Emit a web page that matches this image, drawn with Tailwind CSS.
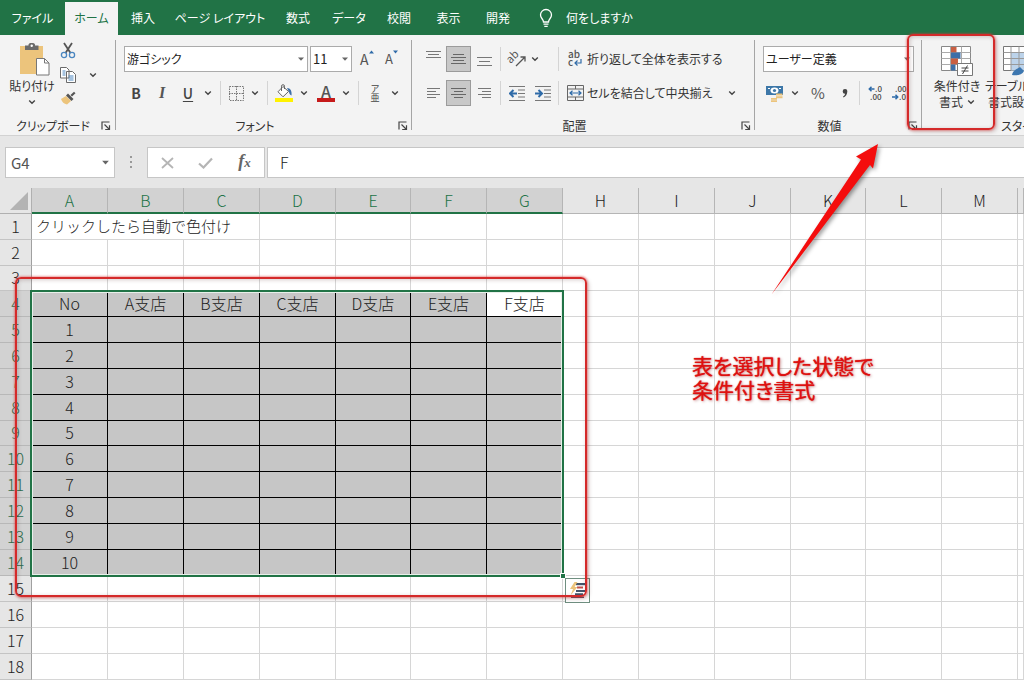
<!DOCTYPE html>
<html lang="ja">
<head>
<meta charset="utf-8">
<title>Excel</title>
<script src="https://cdn.jsdelivr.net/npm/@tailwindcss/browser@4"></script>
</head>
<body class="relative flex h-screen flex-col overflow-hidden bg-[#e6e6e6] font-['Noto_Sans_CJK_JP',sans-serif] text-[12px] leading-4 text-[#333]">

<svg class="hidden">
  <symbol id="chev" viewBox="0 0 8 8"><path d="M1.2 2.4 4 5.2 6.8 2.4" fill="none" stroke="#444" stroke-width="1.4"/></symbol>
  <symbol id="tri" viewBox="0 0 8 8"><path d="M1 2.5h6L4 5.8z" fill="#666"/></symbol>
  <symbol id="launch" viewBox="0 0 10 10"><path d="M1 8.5V1h7.5M3.5 3.5 8 8M8.5 4.2v4.3H4.2" fill="none" stroke="#444" stroke-width="1.2"/></symbol>
</svg>

<nav class="flex h-[35px] shrink-0 items-stretch bg-[#217346] text-white [font-feature-settings:'palt']">
  <button class="w-[65px]">ファイル</button>
  <button class="mt-[2px] w-[53px] bg-[#f3f3f3] pb-[2px] text-[#217346]">ホーム</button>
  <button class="w-[50px]">挿入</button>
  <button class="w-[104px] whitespace-nowrap">ページ レイアウト</button>
  <button class="w-[52px]">数式</button>
  <button class="w-[50px]">データ</button>
  <button class="w-[50px]">校閲</button>
  <button class="w-[49px]">表示</button>
  <button class="w-[50px]">開発</button>
  <button class="ml-[15px] flex items-center gap-3 whitespace-nowrap">
    <svg class="h-[20px] w-[16px]" viewBox="0 0 16 20" fill="none" stroke="#fff" stroke-width="1.3"><path d="M5.500 14c0-3-3-3.600-3-7a5.500 5.500 0 0 1 11 0c0 3.400-3 4-3 7zM5.500 16.200h5M6.300 18.300h3.400"/></svg>
    何をしますか
  </button>
</nav>

<div class="flex h-[101px] shrink-0 overflow-hidden border-b border-[#d2d2d2] bg-[#f3f3f3] [font-feature-settings:'palt']">

  <section class="flex w-[115px] shrink-0 flex-col">
    <div class="flex h-[80px] pt-[7px] pl-[6px]">
      <button class="flex w-[52px] flex-col items-center whitespace-nowrap">
        <svg class="ml-[4px] h-[34px] w-[32px]" viewBox="0 0 32 34"><path d="M2 4h23v28H2z" fill="#ecc47c"/><path d="M7 3.500h3.500V2.500a2 2 0 0 1 2-1.500h2.500a2 2 0 0 1 2 1.500v1h3.500V8H7z" fill="#6a6a6a"/><circle cx="13.700" cy="3.700" r="1.200" fill="#fff"/><path d="M18.500 16.500h8l4.500 4.500v12H18.500z" fill="#fff" stroke="#777"/><path d="M26.500 16.500V21H31" fill="none" stroke="#777"/></svg>
        <span class="mt-[2px]">貼り付け</span>
        <svg class="mt-1 h-2 w-2"><use href="#chev"/></svg>
      </button>
      <div class="flex w-5 flex-col items-center gap-[8px]">
        <button aria-label="切り取り"><svg class="block h-[17px] w-4" viewBox="0 0 16 17" fill="none"><path d="M4 1l6.500 10M12 1 5.500 11" stroke="#555" stroke-width="1.800"/><circle cx="4" cy="13" r="2.600" stroke="#4a86c0" stroke-width="1.300"/><circle cx="12" cy="13" r="2.600" stroke="#4a86c0" stroke-width="1.300"/></svg></button>
        <button aria-label="コピー"><svg class="block h-4 w-4" viewBox="0 0 16 16" fill="#fff" stroke="#6a6a6a"><path d="M.5.500h6L9 3v8H.500zM6.500 4.500h6L15.500 7.500v8h-9z"/><path d="M2.500 4h3M2.500 6h3M2.500 8h3M8.500 9h5M8.500 11h5M8.500 13h5" stroke="#4a86c0"/></svg></button>
        <button aria-label="書式のコピー"><svg class="block h-[14px] w-4" viewBox="0 0 16 14"><path d="M1 8l5-3 5 5-4 3.500C4 13 2 11 1 8z" fill="#ecc47c"/><path d="M6 4.500 8 2.500l5.500 5.500-2 2z" fill="#555"/><path d="M10.500 4 14 .800l1.500 1.500L12 5.500z" fill="#555"/></svg></button>
      </div>
      <button class="ml-[7px] flex w-4 items-start justify-center pt-[29px]" aria-label="コピーのオプション"><svg class="h-2 w-2"><use href="#chev"/></svg></button>
    </div>
    <div class="flex items-center pt-[3px] pr-1 pl-[16px]"><span class="flex-1 whitespace-nowrap">クリップボード</span><button aria-label="クリップボードの設定"><svg class="block h-[10px] w-[10px]"><use href="#launch"/></svg></button></div>
  </section>
  <div class="my-[5px] w-px shrink-0 bg-[#a5a5a5]"></div>

  <section class="flex w-[295px] shrink-0 flex-col">
    <div class="flex h-[80px] flex-col gap-[8px] pt-[11px] pl-2">
      <div class="flex h-[26px] items-center">
        <div class="grid w-[184px] items-center">
          <select aria-label="フォント名" class="col-start-1 row-start-1 h-[26px] appearance-none border border-[#ababab] bg-white pl-[2px] text-[#222]"><option>游ゴシック</option></select>
          <svg class="pointer-events-none col-start-1 row-start-1 mr-[3px] h-2 w-2 justify-self-end"><use href="#tri"/></svg>
        </div>
        <div class="ml-[2px] grid w-[42px] items-center">
          <select aria-label="フォントサイズ" class="col-start-1 row-start-1 h-[26px] appearance-none border border-[#ababab] bg-white pl-[2px] text-[13px] text-[#222]"><option>11</option></select>
          <svg class="pointer-events-none col-start-1 row-start-1 mr-[3px] h-2 w-2 justify-self-end"><use href="#tri"/></svg>
        </div>
        <button class="ml-2 flex h-5 w-[18px] items-start" aria-label="拡大"><span class="text-[14px] leading-5 text-[#555]">A</span><svg class="mt-px h-1 w-[5px]" viewBox="0 0 5 4"><path d="M0 3.500 2.500.500 5 3.500z" fill="#2f6ba8"/></svg></button>
        <button class="ml-[7px] flex h-5 w-[18px] items-start" aria-label="縮小"><span class="text-[13px] leading-5 text-[#555]">A</span><svg class="mt-px h-1 w-[5px]" viewBox="0 0 5 4"><path d="M0 .500 2.500 3.500 5 .500z" fill="#2f6ba8"/></svg></button>
      </div>
      <div class="flex h-[26px] items-center">
        <button class="w-6 text-[14px] font-bold text-[#444]">B</button>
        <button class="w-7 font-['Liberation_Serif',serif] text-[16px] font-bold text-[#555] italic">I</button>
        <button class="w-6 text-[14px] font-medium text-[#444] underline underline-offset-2">U</button>
        <button class="flex w-4 justify-center" aria-label="下線のオプション"><svg class="h-2 w-2"><use href="#chev"/></svg></button>
        <div class="mx-1 h-6 w-px bg-[#d4d4d4]"></div>
        <button class="flex w-[22px] justify-center" aria-label="罫線"><svg class="h-[15px] w-[15px]" viewBox="0 0 15 15"><path d="M.5.500h14v14H.500zM7.500 0v15M0 7.500h15" fill="none" stroke="#777" stroke-dasharray="1.500 1"/></svg></button>
        <button class="flex w-4 justify-center" aria-label="罫線のオプション"><svg class="h-2 w-2"><use href="#chev"/></svg></button>
        <div class="mx-1 h-6 w-px bg-[#d4d4d4]"></div>
        <button class="flex w-6 justify-center" aria-label="塗りつぶしの色"><svg class="h-[18px] w-[18px]" viewBox="0 0 18 18"><path d="M0 14h18v4H0z" fill="#fff200"/><path d="M8 2.500 13.500 7.500 8 12.800 3 7.800z" fill="#fff" stroke="#666"/><path d="M6.500 7V2.200a1.500 1.500 0 0 1 3 0V5" fill="none" stroke="#666"/><path d="M12 4c3.500 0 5 3 4.500 7.500-2-.5-2.200-3-3-4.500z" fill="#3d6fa8"/></svg></button>
        <button class="flex w-4 justify-center" aria-label="塗りつぶしのオプション"><svg class="h-2 w-2"><use href="#chev"/></svg></button>
        <button class="ml-[2px] flex w-6 flex-col items-center" aria-label="フォントの色"><span class="h-[14px] text-[16px] leading-[14px] font-medium text-[#555]">A</span><span class="h-1 w-[18px] bg-[#c61a1a]"></span></button>
        <button class="flex w-4 justify-center" aria-label="フォントの色のオプション"><svg class="h-2 w-2"><use href="#chev"/></svg></button>
        <div class="mx-1 h-6 w-px bg-[#d4d4d4]"></div>
        <button class="flex w-6 flex-col items-center text-[9px] leading-[9px] text-[#444] antialiased" aria-label="ふりがな"><span>ア</span><span>亜</span></button>
        <button class="flex w-4 justify-center" aria-label="ふりがなのオプション"><svg class="h-2 w-2"><use href="#chev"/></svg></button>
      </div>
    </div>
    <div class="flex items-center pt-[3px] pr-[3px]"><span class="flex-1 pr-1 text-center">フォント</span><button aria-label="フォントの設定"><svg class="block h-[10px] w-[10px]"><use href="#launch"/></svg></button></div>
  </section>
  <div class="my-[5px] w-px shrink-0 bg-[#a5a5a5]"></div>

  <section class="flex w-[342px] shrink-0 flex-col">
    <div class="flex h-[80px] flex-col gap-[8px] pt-[11px] pl-2">
      <div class="flex h-[26px] items-center">
        <button class="flex w-[26px] justify-center pb-[8px]" aria-label="上揃え"><svg class="h-2 w-[15px]" viewBox="0 0 15 8"><path d="M0 .500h15M2 3.500h11M0 6.500h15" stroke="#777"/></svg></button>
        <button class="flex h-[26px] w-[25px] items-center justify-center border border-[#9b9b9b] bg-[#c8c8c8]" aria-label="上下中央揃え"><svg class="h-[11px] w-[15px]" viewBox="0 0 15 11"><path d="M2 .500h11M0 3.500h15M2 6.500h11M0 9.500h15" stroke="#666"/></svg></button>
        <button class="flex w-[26px] justify-center pt-[6px]" aria-label="下揃え"><svg class="h-[10px] w-[15px]" viewBox="0 0 15 10"><path d="M0 .500h15M2 4.500h11M0 8.500h15" stroke="#777"/></svg></button>
        <div class="mr-1 ml-[3px] h-6 w-px bg-[#d4d4d4]"></div>
        <button class="flex w-6 justify-center" aria-label="方向"><svg class="h-[18px] w-[18px] overflow-visible" viewBox="0 0 18 18"><text x="0" y="10" transform="rotate(-45 6 9)" font-size="11" fill="#555" font-family="Noto Sans CJK JP, sans-serif">ab</text><path d="M8 16 16.500 7.500M12.500 7h4.500v4.500" fill="none" stroke="#555" stroke-width="1.300"/></svg></button>
        <button class="flex w-3 justify-center" aria-label="方向のオプション"><svg class="h-2 w-2"><use href="#chev"/></svg></button>
        <div class="mr-2 ml-[17px] h-6 w-px bg-[#d4d4d4]"></div>
        <button class="flex items-center gap-1 whitespace-nowrap"><svg class="h-[18px] w-4 overflow-visible" viewBox="0 0 16 18"><g font-size="10" font-weight="500" fill="#555" font-family="Noto Sans CJK JP, sans-serif"><text x="1" y="8">ab</text><text x="1" y="16">c</text></g><path d="M14 9v4H8.500M10.500 10.500 8 13l2.500 2.500" fill="none" stroke="#2f6ba8" stroke-width="1.200"/></svg>折り返して全体を表示する</button>
      </div>
      <div class="flex h-[26px] items-center">
        <button class="flex w-[26px] justify-center" aria-label="左揃え"><svg class="h-[10px] w-[13px]" viewBox="0 0 13 10"><path d="M0 .500h13M0 3.500h9M0 6.500h13M0 9.500h9" stroke="#777"/></svg></button>
        <button class="flex h-[26px] w-[25px] items-center justify-center border border-[#9b9b9b] bg-[#c8c8c8]" aria-label="中央揃え"><svg class="h-[10px] w-[15px]" viewBox="0 0 15 10"><path d="M0 .500h15M3 3.500h9M0 6.500h15M3 9.500h9" stroke="#666"/></svg></button>
        <button class="flex w-[26px] justify-center" aria-label="右揃え"><svg class="h-[10px] w-[13px]" viewBox="0 0 13 10"><path d="M0 .500h13M4 3.500h9M0 6.500h13M4 9.500h9" stroke="#777"/></svg></button>
        <div class="mr-1 ml-[3px] h-6 w-px bg-[#d4d4d4]"></div>
        <button class="flex w-6 justify-center" aria-label="インデントを減らす"><svg class="h-[15px] w-4" viewBox="0 0 16 15" fill="none"><path d="M0 .500h16M9 4h7M9 7.500h7M9 11h7M0 14.500h16" stroke="#777"/><path d="M8 7.500H1.500M4.500 4 1 7.500 4.500 11" stroke="#2f6ba8" stroke-width="2"/></svg></button>
        <button class="ml-[2px] flex w-6 justify-center" aria-label="インデントを増やす"><svg class="h-[15px] w-4" viewBox="0 0 16 15" fill="none"><path d="M0 .500h16M9 4h7M9 7.500h7M9 11h7M0 14.500h16" stroke="#777"/><path d="M0 7.500h6.500M3.500 4 7 7.500 3.500 11" stroke="#2f6ba8" stroke-width="2"/></svg></button>
        <div class="mr-2 ml-[3px] h-6 w-px bg-[#d4d4d4]"></div>
        <button class="flex items-center gap-[3px] whitespace-nowrap"><svg class="h-4 w-[17px]" viewBox="0 0 17 16" fill="none"><path d="M.5.500h16v15H.500zM.5 4h16M.5 12h16M8.500.500V4M8.500 12v3.500" stroke="#666"/><path d="M3 8h11M5.500 5.800 3 8l2.500 2.200M11.500 5.800 14 8l-2.500 2.200" stroke="#2f6ba8" stroke-width="1.200"/></svg>セルを結合して中央揃え</button>
        <button class="mr-[14px] ml-auto flex w-4 justify-center" aria-label="結合のオプション"><svg class="h-2 w-2"><use href="#chev"/></svg></button>
      </div>
    </div>
    <div class="flex items-center pt-[3px] pr-[3px]"><span class="flex-1 pr-[4px] text-center">配置</span><button aria-label="配置の設定"><svg class="block h-[10px] w-[10px]"><use href="#launch"/></svg></button></div>
  </section>
  <div class="my-[5px] w-px shrink-0 bg-[#a5a5a5]"></div>

  <section class="flex w-[166px] shrink-0 flex-col">
    <div class="flex h-[80px] flex-col gap-[8px] pt-[11px] pl-2">
      <div class="grid h-[26px] w-[151px] items-center">
        <select aria-label="表示形式" class="col-start-1 row-start-1 h-[26px] appearance-none border border-[#ababab] bg-white pl-[2px] text-[#222]"><option>ユーザー定義</option></select>
        <svg class="pointer-events-none col-start-1 row-start-1 mr-[3px] h-2 w-2 justify-self-end"><use href="#tri"/></svg>
      </div>
      <div class="flex h-[26px] items-center">
        <button class="flex w-6 justify-center" aria-label="通貨"><svg class="h-[17px] w-[18px]" viewBox="0 0 18 17"><path d="M0 1h17v9H0z" fill="#3d77a8"/><ellipse cx="8.500" cy="5.500" rx="4" ry="3" fill="#fff"/><circle cx="8.500" cy="5.500" r="1.600" fill="#3d77a8"/><path d="M2 3h2v1H2zM13 3h2v1h-2z" fill="#fff"/><path d="M10 8.500h6.500v2H10zM10 11.200h6.500v2H10zM5 13h6v1.700H5zM5 15.300h6V17H5z" fill="#ecc47c"/></svg></button>
        <button class="flex w-4 justify-center" aria-label="通貨のオプション"><svg class="h-2 w-2"><use href="#chev"/></svg></button>
        <button class="w-[30px] text-[15px] text-[#555]">%</button>
        <button class="flex w-6 justify-center" aria-label="桁区切り"><svg class="h-[9px] w-[6px]" viewBox="0 0 6 9"><path d="M3 0a2.300 2.300 0 0 1 2.300 2.600C5.200 5.500 3.800 7.500 1.500 8.500L1 7.500C2.300 6.800 3 5.800 3.100 4.700A2.300 2.300 0 1 1 3 0z" fill="#444"/></svg></button>
        <div class="mr-1 ml-[2px] h-6 w-px bg-[#d4d4d4]"></div>
        <button class="flex w-6 justify-center" aria-label="小数点以下の表示桁数を増やす"><svg class="h-4 w-4 overflow-visible" viewBox="0 0 16 16"><g font-size="8" font-weight="500" fill="#444" font-family="Noto Sans CJK JP, sans-serif"><text x="7" y="7">.0</text><text x="2" y="15">.00</text></g><path d="M6.500 4H1.500M3.500 1.800 1.300 4l2.200 2.200" stroke="#2f6ba8" stroke-width="1.500" fill="none"/></svg></button>
        <button class="flex w-6 justify-center" aria-label="小数点以下の表示桁数を減らす"><svg class="h-4 w-4 overflow-visible" viewBox="0 0 16 16"><g font-size="8" font-weight="500" fill="#444" font-family="Noto Sans CJK JP, sans-serif"><text x="3" y="7">.00</text><text x="7" y="15">.0</text></g><path d="M0 12h5.500M3.500 9.800 5.700 12l-2.200 2.200" stroke="#2f6ba8" stroke-width="1.500" fill="none"/></svg></button>
      </div>
    </div>
    <div class="flex items-center pt-[3px] pr-[3px]"><span class="flex-1 pr-[4px] text-center">数値</span><button aria-label="数値の設定"><svg class="block h-[10px] w-[10px]"><use href="#launch"/></svg></button></div>
  </section>
  <div class="my-[5px] w-px shrink-0 bg-[#a5a5a5]"></div>

  <section class="flex min-w-[200px] flex-1 flex-col">
    <div class="flex h-[80px] pt-[10px] pl-2">
      <button class="flex w-[54px] flex-col items-center whitespace-nowrap">
        <svg class="h-[32px] w-[32px]" viewBox="0 0 32 32"><path d="M.5 1.500h29v24H.500z" fill="#fff" stroke="#888"/><path d="M.5 7.500h29M.5 13.500h29M.5 19.500h29M9.500 1.500v24M20.500 1.500v24" stroke="#aaa"/><path d="M10 2h5.500v5.500H10z" fill="#c95f42"/><path d="M10 7.500h9.500v6H10z" fill="#3d6fa8"/><path d="M10 13.500h7v6h-7z" fill="#c95f42"/><path d="M10 19.500h4.500v6H10z" fill="#3d6fa8"/><path d="M16.500 18.500h15v12h-15z" fill="#fff" stroke="#777"/><path d="M20.500 23h7M20.500 26h7M26.500 20.500l-5 8.500" stroke="#444"/></svg>
        <span class="mt-px">条件付き</span>
        <span class="flex items-center gap-1">書式<svg class="h-2 w-2"><use href="#chev"/></svg></span>
      </button>
      <button class="ml-px flex w-[76px] flex-col items-start whitespace-nowrap">
        <svg class="ml-[18px] h-[32px] w-[34px]" viewBox="0 0 34 32"><path d="M.5 1.500h31v24H.500z" fill="#fff" stroke="#777"/><path d="M8 7.500h24v18H8z" fill="#bcd3ea"/><path d="M.5 7.500h31M.5 13.500h31M.5 19.500h31M8 1.500v24M16 1.500v24M24 1.500v24" stroke="#999"/><path d="M9 30c1-5 5-6 8-8l4 4c-2 4-7 5-12 4z" fill="#3d77b0"/></svg>
        <span class="mt-px">テーブルとして</span>
        <span class="ml-[3px] flex items-center gap-1">書式設定<svg class="h-2 w-2"><use href="#chev"/></svg></span>
      </button>
    </div>
    <div class="pt-[3px] pl-[79px] whitespace-nowrap">スタイル</div>
  </section>
</div>

<div class="flex h-[52px] shrink-0 items-start pt-[11px] pl-[5px] text-[15px]">
  <div class="grid w-[110px] items-center">
    <input aria-label="名前ボックス" value="G4" class="col-start-1 row-start-1 h-[31px] w-full border border-[#c6c6c6] bg-white pl-[5px] text-[#555]">
    <svg class="pointer-events-none col-start-1 row-start-1 mr-[5px] h-[9px] w-[9px] justify-self-end"><use href="#tri"/></svg>
  </div>
  <svg class="mx-[14px] mt-2 h-[14px] w-1" viewBox="0 0 4 14" fill="#999"><path d="M1 1h2v2H1zM1 6h2v2H1zM1 11h2v2H1z"/></svg>
  <div class="flex h-[31px] w-[118px] items-center border border-[#c6c6c6] bg-white">
    <button class="flex w-[38px] justify-center" aria-label="キャンセル"><svg class="h-[12px] w-[13px]" viewBox="0 0 13 12"><path d="M1 1l11 10M12 1 1 11" stroke="#b5b5b5" stroke-width="1.800"/></svg></button>
    <button class="flex w-[39px] justify-center" aria-label="入力"><svg class="h-[12px] w-[15px]" viewBox="0 0 15 12"><path d="M1 6.500 5.500 10.500 14 1.500" fill="none" stroke="#b5b5b5" stroke-width="2.200"/></svg></button>
    <button class="w-[39px] pb-[2px] font-['Liberation_Serif',serif] text-[18px] font-bold text-[#666] italic" aria-label="関数の挿入">f<span class="text-[13px]">x</span></button>
  </div>
  <input aria-label="数式バー" value="F" class="ml-[2px] h-[31px] min-w-0 flex-1 border border-r-0 border-[#c6c6c6] bg-white pb-[2px] pl-[12px] text-[16px] font-light text-[#222]">
</div>

<main class="relative flex-1 bg-white">
  <table class="w-full table-fixed border-separate border-spacing-0 text-[16px] leading-5 font-light text-[#222]">
    <colgroup>
      <col class="w-[32px]"><col class="w-[76px]"><col class="w-[76px]"><col class="w-[76px]"><col class="w-[76px]"><col class="w-[75px]"><col class="w-[76px]"><col class="w-[76px]"><col class="w-[76px]"><col class="w-[76px]"><col class="w-[76px]"><col class="w-[75px]"><col class="w-[76px]"><col class="w-[76px]"><col>
    </colgroup>
    <thead><tr id="head"></tr></thead>
    <tbody id="body"></tbody>
  </table>
  <div class="pointer-events-none absolute top-[102px] left-[30px] h-[287px] w-[534px] border-2 border-[#217346] inset-ring inset-ring-[#e8f0ea]"></div>
  <div class="absolute top-[385px] left-[560px] h-[6px] w-[6px] border border-white bg-[#217346]"></div>
  <button class="absolute top-[390px] left-[565px] flex h-[25px] w-[25px] items-center justify-center border border-[#6f8f80] bg-white" aria-label="クイック分析">
    <svg class="h-[17px] w-[18px]" viewBox="0 0 18 17"><path d="M7 1h10v2.200H7z" fill="#44546a"/><path d="M8 4.500h6v2H8z" fill="#c0504d"/><path d="M7 8h9v2H7z" fill="#44546a"/><path d="M6 11.300h8v2H6zM2 14.500h13v1.500H2z" fill="#44546a"/><path d="M5.500 0 1 7h3L1.500 13.500 8.500 5H5.500L8.500 0z" fill="#ecc47c"/></svg>
  </button>
</main>

<div class="pointer-events-none absolute top-[277px] left-[15px] h-[320px] w-[572px] rounded-md border-2 border-[#d42a2a] shadow-[0_0_2px_1px_rgba(230,60,60,0.45),2px_2px_4px_rgba(60,0,0,0.2),inset_1px_1px_4px_rgba(60,0,0,0.2)]"></div>
<div class="pointer-events-none absolute top-[34px] left-[907px] h-[96px] w-[88px] rounded-md border-2 border-[#d42a2a] shadow-[0_0_2px_1px_rgba(230,60,60,0.45),2px_2px_4px_rgba(60,0,0,0.2),inset_1px_1px_4px_rgba(60,0,0,0.2)]"></div>
<svg class="pointer-events-none absolute top-[140px] left-[765px] h-[160px] w-[120px] drop-shadow-[2px_2px_2px_rgba(0,0,0,0.4)]" viewBox="765 140 120 160"><path d="M771.500 294.500 861 159.500 856 156.500 878 144 873 168.500 870 165z" fill="#f40d0d"/></svg>
<p class="pointer-events-none absolute top-[353px] left-[692px] text-[21px] leading-6 whitespace-nowrap text-[#dd1111] [font-feature-settings:'palt'] text-shadow-[0_0_1px_#dd1111,1px_1px_3px_rgba(120,0,0,0.45)]">表を選択した状態で<br>条件付き書式</p>

<script>
const cols = ['A','B','C','D','E','F','G','H','I','J','K','L','M',''];
const head = document.getElementById('head');
const body = document.getElementById('body');
function add(row, tag, cls, text) {
  const c = document.createElement(tag);
  c.className = cls;
  c.textContent = text;
  row.appendChild(c);
  return c;
}
add(head, 'th', 'h-[26px] border-r border-b border-[#b0b0b0] bg-[#e6e6e6] p-0 pl-[10px]', '').innerHTML =
  '<svg class="block h-[18px] w-[18px]" viewBox="0 0 18 18"><path d="M18 0v18H0z" fill="#b3b3b3"/></svg>';
cols.forEach((c, i) => add(head, 'th',
  i < 7 ? 'h-[26px] border-r border-b-2 border-r-[#b5b5b5] border-b-[#217346] bg-[#d2d2d2] p-0 pb-px font-light text-[#217346]'
        : 'h-[26px] border-r border-b border-[#b5b5b5] bg-[#e6e6e6] p-0 pb-[2px] font-light', c));
for (let r = 1; r <= 18; r++) {
  const tr = document.createElement('tr');
  tr.className = r === 3 || r === 9 ? 'h-[25px]' : 'h-[26px]';
  const sel = r >= 4 && r <= 14;
  add(tr, 'th', sel ? 'border-r border-b border-r-[#217346] border-b-[#b8b8b8] bg-[#d2d2d2] p-0 pb-[2px] font-light text-[#2f6b4c]'
                    : 'border-r border-b border-r-[#a0a0a0] border-b-[#c4c4c4] bg-[#e6e6e6] p-0 pb-[2px] font-light', r);
  cols.forEach((c, i) => {
    let text = '';
    let cls = 'border-r border-b border-[#d6d6d6] p-0';
    if (sel && i < 7) {
      cls = r === 4 && i === 6 ? 'border-r border-b border-black bg-white p-0 pb-[2px] text-center'
                               : 'border-r border-b border-black bg-[#c6c6c6] p-0 pb-[2px] text-center';
      if (r === 4) text = i ? cols[i - 1] + '支店' : 'No';
      else if (!i) text = String(r - 4);
    }
    if (r === 1 && i === 0) {
      cls = 'border-b border-[#d6d6d6] p-0 pb-[2px] pl-1 whitespace-nowrap text-[15px]';
      text = 'クリックしたら自動で色付け';
    }
    if (r === 1 && i === 1) cls = 'border-b border-[#d6d6d6] p-0';
    add(tr, 'td', cls, text);
  });
  body.appendChild(tr);
}
</script>
</body>
</html>
